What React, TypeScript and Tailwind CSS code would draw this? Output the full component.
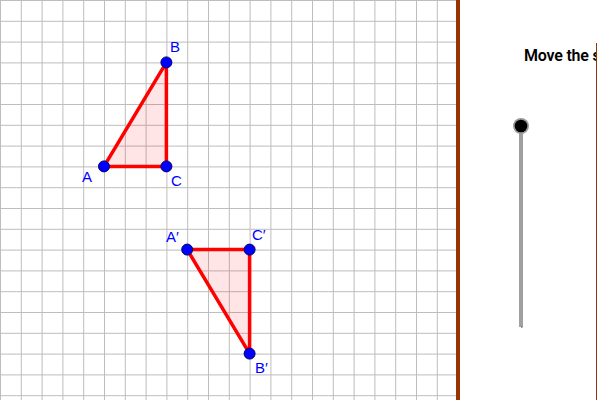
const S = 20.8;

const GridCanvas = () => {
    const vLines = Array.from({ length: 22 }, (_, i) => i * S);
    const hLines = Array.from({ length: 20 }, (_, i) => i * S);
    const pt = (x: number, y: number) => [x * S, y * S] as const;
    const A = pt(5, 8), B = pt(8, 3), C = pt(8, 8);
    const A2 = pt(9, 12), B2 = pt(12, 17), C2 = pt(12, 12);
    const label = "fill-[#0000ff] font-['Liberation_Sans',Arial,sans-serif] text-[15px]";

    return (
        <svg width="456" height="400" className="block shrink-0">
            <rect width="456" height="400" fill="#ffffff" />
            {vLines.map((x) => (
                <line key={'v' + x} x1={x + 0.5} y1={0} x2={x + 0.5} y2={400} stroke="#bdbdbd" strokeWidth="1" />
            ))}
            {hLines.map((y) => (
                <line key={'h' + y} x1={0} y1={y + 0.5} x2={456} y2={y + 0.5} stroke="#bdbdbd" strokeWidth="1" />
            ))}

            {/* original triangle */}
            <polygon points={`${A} ${B} ${C}`} fill="rgba(255,0,0,0.1)" stroke="#ff0000" strokeWidth="3.5" strokeLinejoin="round" />
            {/* image triangle */}
            <polygon points={`${A2} ${B2} ${C2}`} fill="rgba(255,0,0,0.1)" stroke="#ff0000" strokeWidth="3.5" strokeLinejoin="round" />

            {[A, B, C, A2, B2, C2].map(([x, y], i) => (
                <circle key={i} cx={x} cy={y} r="5.5" fill="#0000ff" stroke="#000066" strokeWidth="1" />
            ))}

            <text x="170" y="52" className={label}>B</text>
            <text x="82" y="182" className={label}>A</text>
            <text x="171" y="186" className={label}>C</text>
            <text x="166" y="242" className={label}>A′</text>
            <text x="252" y="240" className={label}>C′</text>
            <text x="255" y="373" className={label}>B′</text>
        </svg>
    );
};

const Slider = () => (
    <svg width="24" height="216" className="block">
        <line x1="12" y1="10" x2="12" y2="211" stroke="#a0a0a0" strokeWidth="4" />
        <rect x="12" y="210" width="1.5" height="2" fill="#909090" />
        <circle cx="12" cy="10" r="8" fill="#9a9a9a" />
        <circle cx="12" cy="10" r="6.3" fill="#000000" />
    </svg>
);

export default function App() {
    return (
        <div className="flex h-[400px] w-[600px] overflow-hidden bg-white">
            <GridCanvas />
            <div className="h-full w-[4px] shrink-0 bg-[#993300]" />
            <div className="relative h-full flex-1">
                <div className="ml-[64px] mt-[43px] h-[357px] w-[73px] overflow-hidden whitespace-nowrap border-r border-[#8b3a0f]">
                    <span className="font-['Roboto','Liberation_Sans',sans-serif] text-[16px] font-semibold leading-[24px] tracking-[-0.2px] text-black">
                        Move the slider
                    </span>
                </div>
                {/* slider sits over the text box column */}
                <div className="absolute left-[49px] top-[116px]">
                    <Slider />
                </div>
            </div>
        </div>
    );
}
